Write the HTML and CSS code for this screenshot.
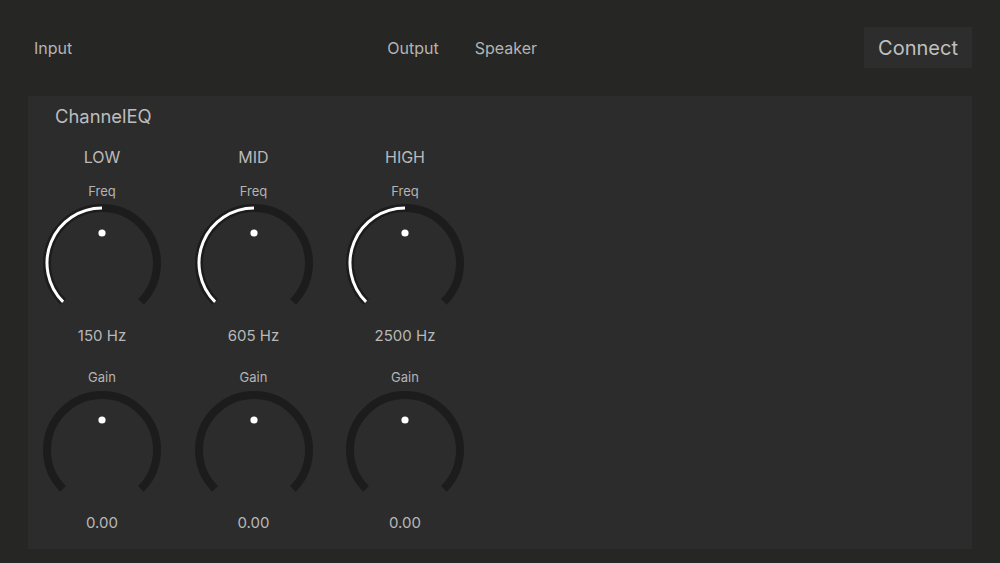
FILE: index.html
```html
<!DOCTYPE html>
<html>
<head>
<meta charset="utf-8">
<link rel="stylesheet" href="styles.css">
</head>
<body>
<div class="app">
  <header class="topbar">
    <span class="nav-item">Input</span>
    <div class="nav-mid">
      <span class="nav-item">Output</span>
      <span class="nav-item">Speaker</span>
    </div>
    <button class="connect">Connect</button>
  </header>
  <section class="panel">
    <h1 class="panel-title">ChannelEQ</h1>
    <div class="bands">
      <div class="band">
        <div class="band-name">LOW</div>
        <div class="param">Freq</div>
        <svg class="knob" viewBox="0 0 124 124" width="124" height="124"><path class="track" d="M23.11 100.89 A55 55 0 1 1 100.89 100.89"/><path class="value" d="M23.11 100.89 A55 55 0 0 1 62 7"/><circle class="dot" cx="62" cy="32" r="3.6"/></svg>
        <div class="readout">150 Hz</div>
        <div class="param gain">Gain</div>
        <svg class="knob" viewBox="0 0 124 124" width="124" height="124"><path class="track" d="M23.11 100.89 A55 55 0 1 1 100.89 100.89"/><circle class="dot" cx="62" cy="32" r="3.6"/></svg>
        <div class="readout">0.00</div>
      </div>
      <div class="band">
        <div class="band-name">MID</div>
        <div class="param">Freq</div>
        <svg class="knob" viewBox="0 0 124 124" width="124" height="124"><path class="track" d="M23.11 100.89 A55 55 0 1 1 100.89 100.89"/><path class="value" d="M23.11 100.89 A55 55 0 0 1 62 7"/><circle class="dot" cx="62" cy="32" r="3.6"/></svg>
        <div class="readout">605 Hz</div>
        <div class="param gain">Gain</div>
        <svg class="knob" viewBox="0 0 124 124" width="124" height="124"><path class="track" d="M23.11 100.89 A55 55 0 1 1 100.89 100.89"/><circle class="dot" cx="62" cy="32" r="3.6"/></svg>
        <div class="readout">0.00</div>
      </div>
      <div class="band">
        <div class="band-name">HIGH</div>
        <div class="param">Freq</div>
        <svg class="knob" viewBox="0 0 124 124" width="124" height="124"><path class="track" d="M23.11 100.89 A55 55 0 1 1 100.89 100.89"/><path class="value" d="M23.11 100.89 A55 55 0 0 1 62 7"/><circle class="dot" cx="62" cy="32" r="3.6"/></svg>
        <div class="readout">2500 Hz</div>
        <div class="param gain">Gain</div>
        <svg class="knob" viewBox="0 0 124 124" width="124" height="124"><path class="track" d="M23.11 100.89 A55 55 0 1 1 100.89 100.89"/><circle class="dot" cx="62" cy="32" r="3.6"/></svg>
        <div class="readout">0.00</div>
      </div>
    </div>
  </section>
</div>
</body>
</html>
```

FILE: styles.css
```css
html, body {
  margin: 0;
  padding: 0;
  background: #262624;
  height: 100%;
}
body {
  font-family: Inter, "Noto Sans", "Liberation Sans", sans-serif;
  color: #b8b8b8;
  overflow: hidden;
}
.app {
  padding: 0 28px;
}
.topbar {
  height: 96px;
  display: flex;
  align-items: center;
}
.nav-item {
  font-size: 16px;
  line-height: 20px;
  color: #b4b4b4;
}
.topbar > .nav-item {
  margin-left: 6px;
}
.nav-mid {
  display: flex;
  gap: 36px;
  margin-left: 315px;
}
.connect {
  margin-left: auto;
  width: 108px;
  height: 41px;
  border: none;
  background: #2d2d2d;
  color: #c0c0c0;
  font-family: inherit;
  font-size: 20px;
  padding: 0;
  margin-top: -1px;
}
.panel {
  background: #2c2c2c;
  height: 453px;
  padding: 8px 0 0 0;
  box-sizing: border-box;
}
.panel-title {
  margin: 0 0 0 27px;
  font-size: 18.4px;
  font-weight: 400;
  line-height: 24px;
  color: #bdbdbd;
}
.bands {
  display: flex;
  gap: 27.5px;
  padding-left: 12px;
  margin-top: 19px;
}
.band {
  width: 124px;
  display: flex;
  flex-direction: column;
  align-items: center;
}
.band-name {
  font-size: 16px;
  line-height: 20px;
  color: #bababa;
}
.param {
  font-size: 13px;
  line-height: 16px;
  margin-top: 16px;
  color: #b4b4b4;
}
.param.gain {
  margin-top: 23px;
}
.knob {
  display: block;
  margin-top: 2px;
}
.param.gain + .knob {
  margin-top: 3px;
}
.track {
  fill: none;
  stroke: #1c1c1c;
  stroke-width: 8;
}
.value {
  fill: none;
  stroke: #ffffff;
  stroke-width: 3;
}
.dot {
  fill: #ffffff;
}
.readout {
  font-size: 15px;
  line-height: 20px;
  margin-top: 1px;
  color: #b8b8b8;
}
```
